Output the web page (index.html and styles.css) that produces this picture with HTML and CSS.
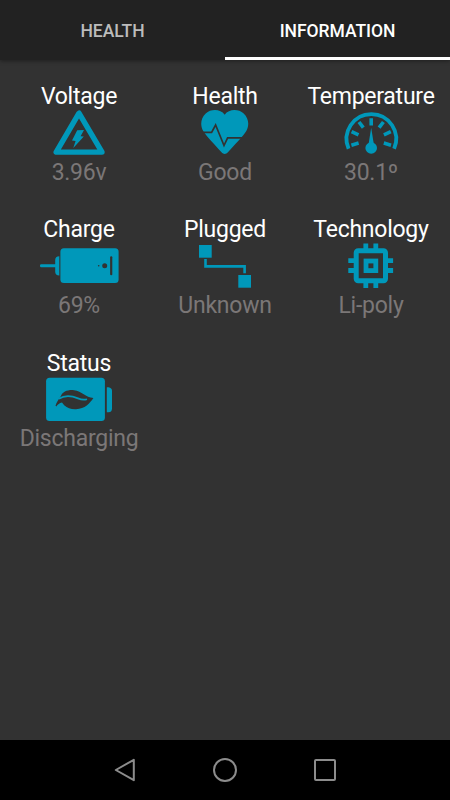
FILE: index.html
```html
<!DOCTYPE html>
<html lang="en">
<head>
    <meta charset="UTF-8">
    <meta name="viewport" content="width=device-width, initial-scale=1.0">
    <title>Battery Information</title>
    <link rel="stylesheet" href="styles.css">
</head>
<body>
    <div class="screen">
        <!-- Tabs -->
        <nav class="tabs">
            <div class="tab">HEALTH</div>
            <div class="tab active">INFORMATION</div>
        </nav>

        <!-- Battery details -->
        <main class="info-grid">
            <div class="info-item">
                <div class="info-label">Voltage</div>
                <svg class="icon" viewBox="0 0 90 46">
                    <path class="line" stroke-width="5.4" stroke-linejoin="round" d="M45 4.2 L22.2 43.1 H68 Z"/>
                    <path d="M43.2 21.2 L50 21 L46.6 27.2 L49.8 27.5 L39.3 39 L41.6 32 L38 31.5 Z"/>
                </svg>
                <div class="info-value">3.96v</div>
            </div>

            <div class="info-item">
                <div class="info-label">Health</div>
                <svg class="icon" viewBox="0 0 90 46">
                    <path d="M44.7 5.7 C40.5 -0.3 31 -0.3 25.7 4.4 C20.4 9.4 20 17 23.5 22.5 C26 26.5 35 36 41.5 43.3 C43.6 45.6 45.8 45.6 47.9 43.3 C54.5 36 63.5 26.5 66 22.5 C69.5 17 69 9.4 63.7 4.4 C58.4 -0.3 48.9 -0.3 44.7 5.7 Z"/>
                    <path class="cut-line" stroke-width="1.7" d="M22 23.3 H31.6 L35.6 16 L44 36.5 L47.6 28.8 H64"/>
                </svg>
                <div class="info-value">Good</div>
            </div>

            <div class="info-item">
                <div class="info-label">Temperature</div>
                <svg class="icon" viewBox="0 0 90 46">
                    <path class="line" stroke-width="3.8" d="M22.6 39.7 A24.8 24.8 0 1 1 68.1 39.7"/>
                    <path class="line" stroke-width="3.6" d="M45.2 9.2 V16.4 M33 13 L37.3 18.7 M57.4 13 L53.1 18.7 M25.6 22.7 L32.5 25.8 M64.8 22.7 L57.9 25.8 M25.4 36.2 L32.6 34.1 M65 36.2 L57.8 34.1"/>
                    <path d="M45.2 18.7 L47.8 35 H42.6 Z"/>
                    <circle cx="45.2" cy="39" r="5.8"/>
                </svg>
                <div class="info-value">30.1º</div>
            </div>

            <div class="info-item">
                <div class="info-label">Charge</div>
                <svg class="icon" viewBox="0 0 90 46">
                    <rect x="6" y="22.2" width="17" height="3" rx="1.2"/>
                    <path d="M25.3 14.2 V33.4 C22.5 33.4 21.2 32 21.2 29.5 V18 C21.2 15.6 22.5 14.2 25.3 14.2 Z"/>
                    <rect x="26.4" y="6.2" width="58.2" height="34.7" rx="3.5"/>
                    <circle class="cut" cx="64.7" cy="23.7" r="0.8"/>
                    <circle class="cut" cx="70.7" cy="23.7" r="2.5"/>
                    <rect class="cut" x="76.1" y="14.2" width="2.2" height="19" rx="1"/>
                </svg>
                <div class="info-value">69%</div>
            </div>

            <div class="info-item">
                <div class="info-label">Plugged</div>
                <svg class="icon" viewBox="0 0 90 46">
                    <rect x="19" y="3" width="12.7" height="12.7"/>
                    <rect x="58.3" y="33" width="12.7" height="12.7"/>
                    <path class="line" stroke-width="2.6" d="M25.5 17 V24.4 H64.6 V31.2"/>
                </svg>
                <div class="info-value">Unknown</div>
            </div>

            <div class="info-item">
                <div class="info-label">Technology</div>
                <svg class="icon" viewBox="0 0 90 46">
                    <rect class="line" stroke-width="5" x="30.2" y="8.7" width="29.3" height="30" rx="2"/>
                    <rect class="line" stroke-width="4.8" x="40" y="19" width="9.8" height="9.6"/>
                    <path class="line" stroke-width="4.8" d="M39.8 1.6 V7 M49.8 1.6 V7 M39.8 40 V46 M49.8 40 V46 M22.3 18.7 H28.5 M22.3 28.5 H28.5 M61 18.7 H67.1 M61 28.5 H67.1"/>
                </svg>
                <div class="info-value">Li-poly</div>
            </div>

            <div class="info-item">
                <div class="info-label">Status</div>
                <svg class="icon" viewBox="0 0 90 46">
                    <rect x="12.1" y="1.8" width="58.8" height="43.3" rx="3.5"/>
                    <path d="M72.8 11.2 H74.5 Q78 11.6 78 15 V32.5 Q78 36 74.5 36.3 H72.8 Z"/>
                    <path class="cut" d="M26.6 20.6 C28.5 15.5 34 13.6 40 14.2 C48 15 51.5 21.5 59.4 22 C56 27 51 33 42 33.2 C37 33.4 33.5 32 30.2 29.2 L28 26.6 C25.3 27.2 23.8 28.5 22.3 30.6 L21.5 29.8 C22.5 26.5 24.5 23.5 26.6 20.6 Z"/>
                    <path class="line" stroke-width="1.7" d="M24.8 22.8 C32 18.2 39 20.3 44 22.4 C47.5 23.9 50.5 24 53 23.2"/>
                </svg>
                <div class="info-value">Discharging</div>
            </div>
        </main>

        <!-- System navigation -->
        <footer class="nav-bar">
            <svg class="nav-icon" viewBox="0 0 26 26"><path d="M3.8 13 L21.8 2.8 V23.2 Z"/></svg>
            <svg class="nav-icon" viewBox="0 0 26 26"><circle cx="13" cy="13" r="11"/></svg>
            <svg class="nav-icon" viewBox="0 0 26 26"><rect x="3" y="3" width="20" height="20" rx="1"/></svg>
        </footer>
    </div>
</body>
</html>
```

FILE: styles.css
```css
:root {
    --bg: #323232;
    --bar: #222222;
    --accent: #0098ba;
    --text: #ffffff;
    --muted: #7b7777;
}

* {
    box-sizing: border-box;
    margin: 0;
    padding: 0;
}

body {
    font-family: Roboto, sans-serif;
    background: var(--bg);
    color: var(--text);
}

.screen {
    display: flex;
    flex-direction: column;
    height: 800px;
}

.tabs {
    display: flex;
    height: 60px;
    background: var(--bar);
    box-shadow: 0 1px 4px rgba(0, 0, 0, 0.4);
}

.tab {
    flex: 1;
    padding-top: 4px;
    border-bottom: 3px solid transparent;
    line-height: 54px;
    text-align: center;
    font-size: 17.5px;
    font-weight: 500;
    letter-spacing: -0.05px;
    color: #bcbcbc;
}

.tab.active {
    color: var(--text);
    border-bottom-color: var(--text);
}

.info-grid {
    flex: 1;
    display: grid;
    grid-template-columns: repeat(3, 146px);
    grid-auto-rows: 133.33px;
    justify-content: center;
    padding-top: 24px;
}

.info-item {
    display: flex;
    flex-direction: column;
    align-items: center;
    white-space: nowrap;
    font-size: 23px;
    letter-spacing: -0.25px;
    line-height: 26px;
}

.info-value {
    margin-top: 4.5px;
    color: var(--muted);
}

.icon {
    width: 90px;
    height: 46px;
    margin-top: -1px;
    fill: var(--accent);
}

.icon .line {
    fill: none;
    stroke: var(--accent);
}

.icon .cut {
    fill: var(--bg);
}

.icon .cut-line {
    fill: none;
    stroke: var(--bg);
}

.nav-bar {
    display: flex;
    justify-content: center;
    align-items: center;
    gap: 74px;
    height: 60px;
    background: #000000;
}

.nav-icon {
    width: 26px;
    height: 26px;
    fill: none;
    stroke: #8c8c8c;
    stroke-width: 2;
    stroke-linejoin: round;
}
```
